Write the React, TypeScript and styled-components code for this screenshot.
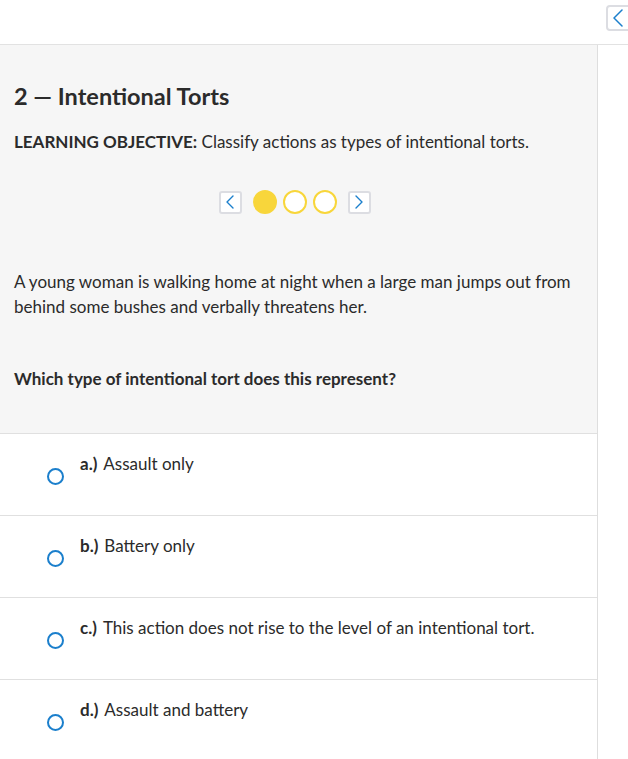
import { createGlobalStyle, styled } from 'styled-components';

const GlobalStyle = createGlobalStyle`
  html, body {
    margin: 0;
    padding: 0;
    background: #ffffff;
    font-family: Lato, 'Open Sans', sans-serif;
    color: #2b2b2b;
    overflow: hidden;
  }
`;

const Styled = {
  Page: styled.div`
    width: 628px;
    height: 759px;
    display: flex;
    flex-direction: column;
  `,

  TopBar: styled.header`
    height: 44px;
    flex-shrink: 0;
    border-bottom: 1px solid #e2e2e2;
    display: flex;
    justify-content: flex-end;
    align-items: flex-start;
    overflow: hidden;
  `,

  CollapseButton: styled.button`
    margin-top: 5px;
    margin-right: -8px;
    width: 30px;
    height: 26px;
    padding: 0 0 0 4px;
    display: flex;
    align-items: center;
    background: #fff;
    border: 2px solid #dcdde2;
    border-radius: 4px;
    color: #1b7fcc;
  `,

  Body: styled.div`
    flex: 1;
    display: flex;
  `,

  Main: styled.main`
    width: 597px;
    border-right: 1px solid #dedede;
    display: flex;
    flex-direction: column;
  `,

  Intro: styled.section`
    background: #f6f6f6;
    padding: 38px 14px 42px;
    border-bottom: 1px solid #e0e0e0;
  `,

  Title: styled.h2`
    margin: 0;
    font-size: 23.5px;
    line-height: 26px;
    font-weight: 700;
    color: #2b2b2b;
  `,

  Objective: styled.p`
    margin: 21px 0 0;
    font-size: 17px;
    line-height: 24px;
  `,

  Strong: styled.span`
    font-weight: 700;
  `,

  Pager: styled.div`
    margin-top: 36px;
    padding-right: 8px;
    display: flex;
    justify-content: center;
    align-items: center;
    gap: 6px;
  `,

  PagerButton: styled.button`
    width: 23px;
    height: 23px;
    padding: 0;
    display: flex;
    justify-content: center;
    align-items: center;
    background: #fff;
    border: 2px solid #dcdde2;
    border-radius: 3px;
    color: #1b7fcc;
    margin: 0 5px;
  `,

  Dot: styled.span<{ $active?: boolean }>`
    width: 24px;
    height: 24px;
    box-sizing: border-box;
    border-radius: 50%;
    border: 2px solid #f8d63b;
    background: ${({ $active }) => ($active ? '#f8d63b' : '#ffffff')};
  `,

  Scenario: styled.p`
    margin: 55px 0 0;
    font-size: 17px;
    line-height: 25px;
  `,

  Question: styled.p`
    margin: 48px 0 0;
    font-size: 17px;
    line-height: 24px;
    font-weight: 700;
  `,

  Option: styled.label`
    height: 81px;
    border-bottom: 1px solid #e0e0e0;
    display: flex;
    align-items: flex-start;
    padding-left: 47px;
  `,

  Radio: styled.span`
    margin-top: 34px;
    width: 17px;
    height: 17px;
    box-sizing: border-box;
    border-radius: 50%;
    border: 2px solid #1b7fcc;
    flex-shrink: 0;
  `,

  OptionText: styled.span`
    margin: 18px 0 0 16px;
    font-size: 17px;
    line-height: 24px;
  `,

  Letter: styled.span`
    font-weight: 700;
    margin-right: 6px;
  `,
};

const Chevron = ({ dir }: { dir: 'left' | 'right' }) => (
  <svg width="10" height="14" viewBox="0 0 10 14" fill="none">
    <path
      d={dir === 'left' ? 'M8 1 L2 7 L8 13' : 'M2 1 L8 7 L2 13'}
      stroke="currentColor"
      strokeWidth="1.4"
      strokeLinecap="round"
      strokeLinejoin="round"
    />
  </svg>
);

const options = [
  { letter: 'a.)', text: 'Assault only' },
  { letter: 'b.)', text: 'Battery only' },
  { letter: 'c.)', text: 'This action does not rise to the level of an intentional tort.' },
  { letter: 'd.)', text: 'Assault and battery' },
];

function App() {
  return (
    <>
      <GlobalStyle />
      <Styled.Page>
        <Styled.TopBar>
          <Styled.CollapseButton aria-label="Collapse">
            <svg width="12" height="18" viewBox="0 0 12 18" fill="none">
              <path d="M10 1 L2 9 L10 17" stroke="currentColor" strokeWidth="1.5" strokeLinecap="round" strokeLinejoin="round" />
            </svg>
          </Styled.CollapseButton>
        </Styled.TopBar>
        <Styled.Body>
          <Styled.Main>
            <Styled.Intro>
              <Styled.Title>2 — Intentional Torts</Styled.Title>
              <Styled.Objective>
                <Styled.Strong>LEARNING OBJECTIVE:</Styled.Strong> Classify actions as types of intentional torts.
              </Styled.Objective>
              <Styled.Pager>
                <Styled.PagerButton aria-label="Previous">
                  <Chevron dir="left" />
                </Styled.PagerButton>
                <Styled.Dot $active />
                <Styled.Dot />
                <Styled.Dot />
                <Styled.PagerButton aria-label="Next">
                  <Chevron dir="right" />
                </Styled.PagerButton>
              </Styled.Pager>
              <Styled.Scenario>
                A young woman is walking home at night when a large man jumps out from behind some bushes and verbally
                threatens her.
              </Styled.Scenario>
              <Styled.Question>Which type of intentional tort does this represent?</Styled.Question>
            </Styled.Intro>
            {options.map((o) => (
              <Styled.Option key={o.letter}>
                <Styled.Radio />
                <Styled.OptionText>
                  <Styled.Letter>{o.letter}</Styled.Letter>
                  {o.text}
                </Styled.OptionText>
              </Styled.Option>
            ))}
          </Styled.Main>
        </Styled.Body>
      </Styled.Page>
    </>
  );
}

export default App;
